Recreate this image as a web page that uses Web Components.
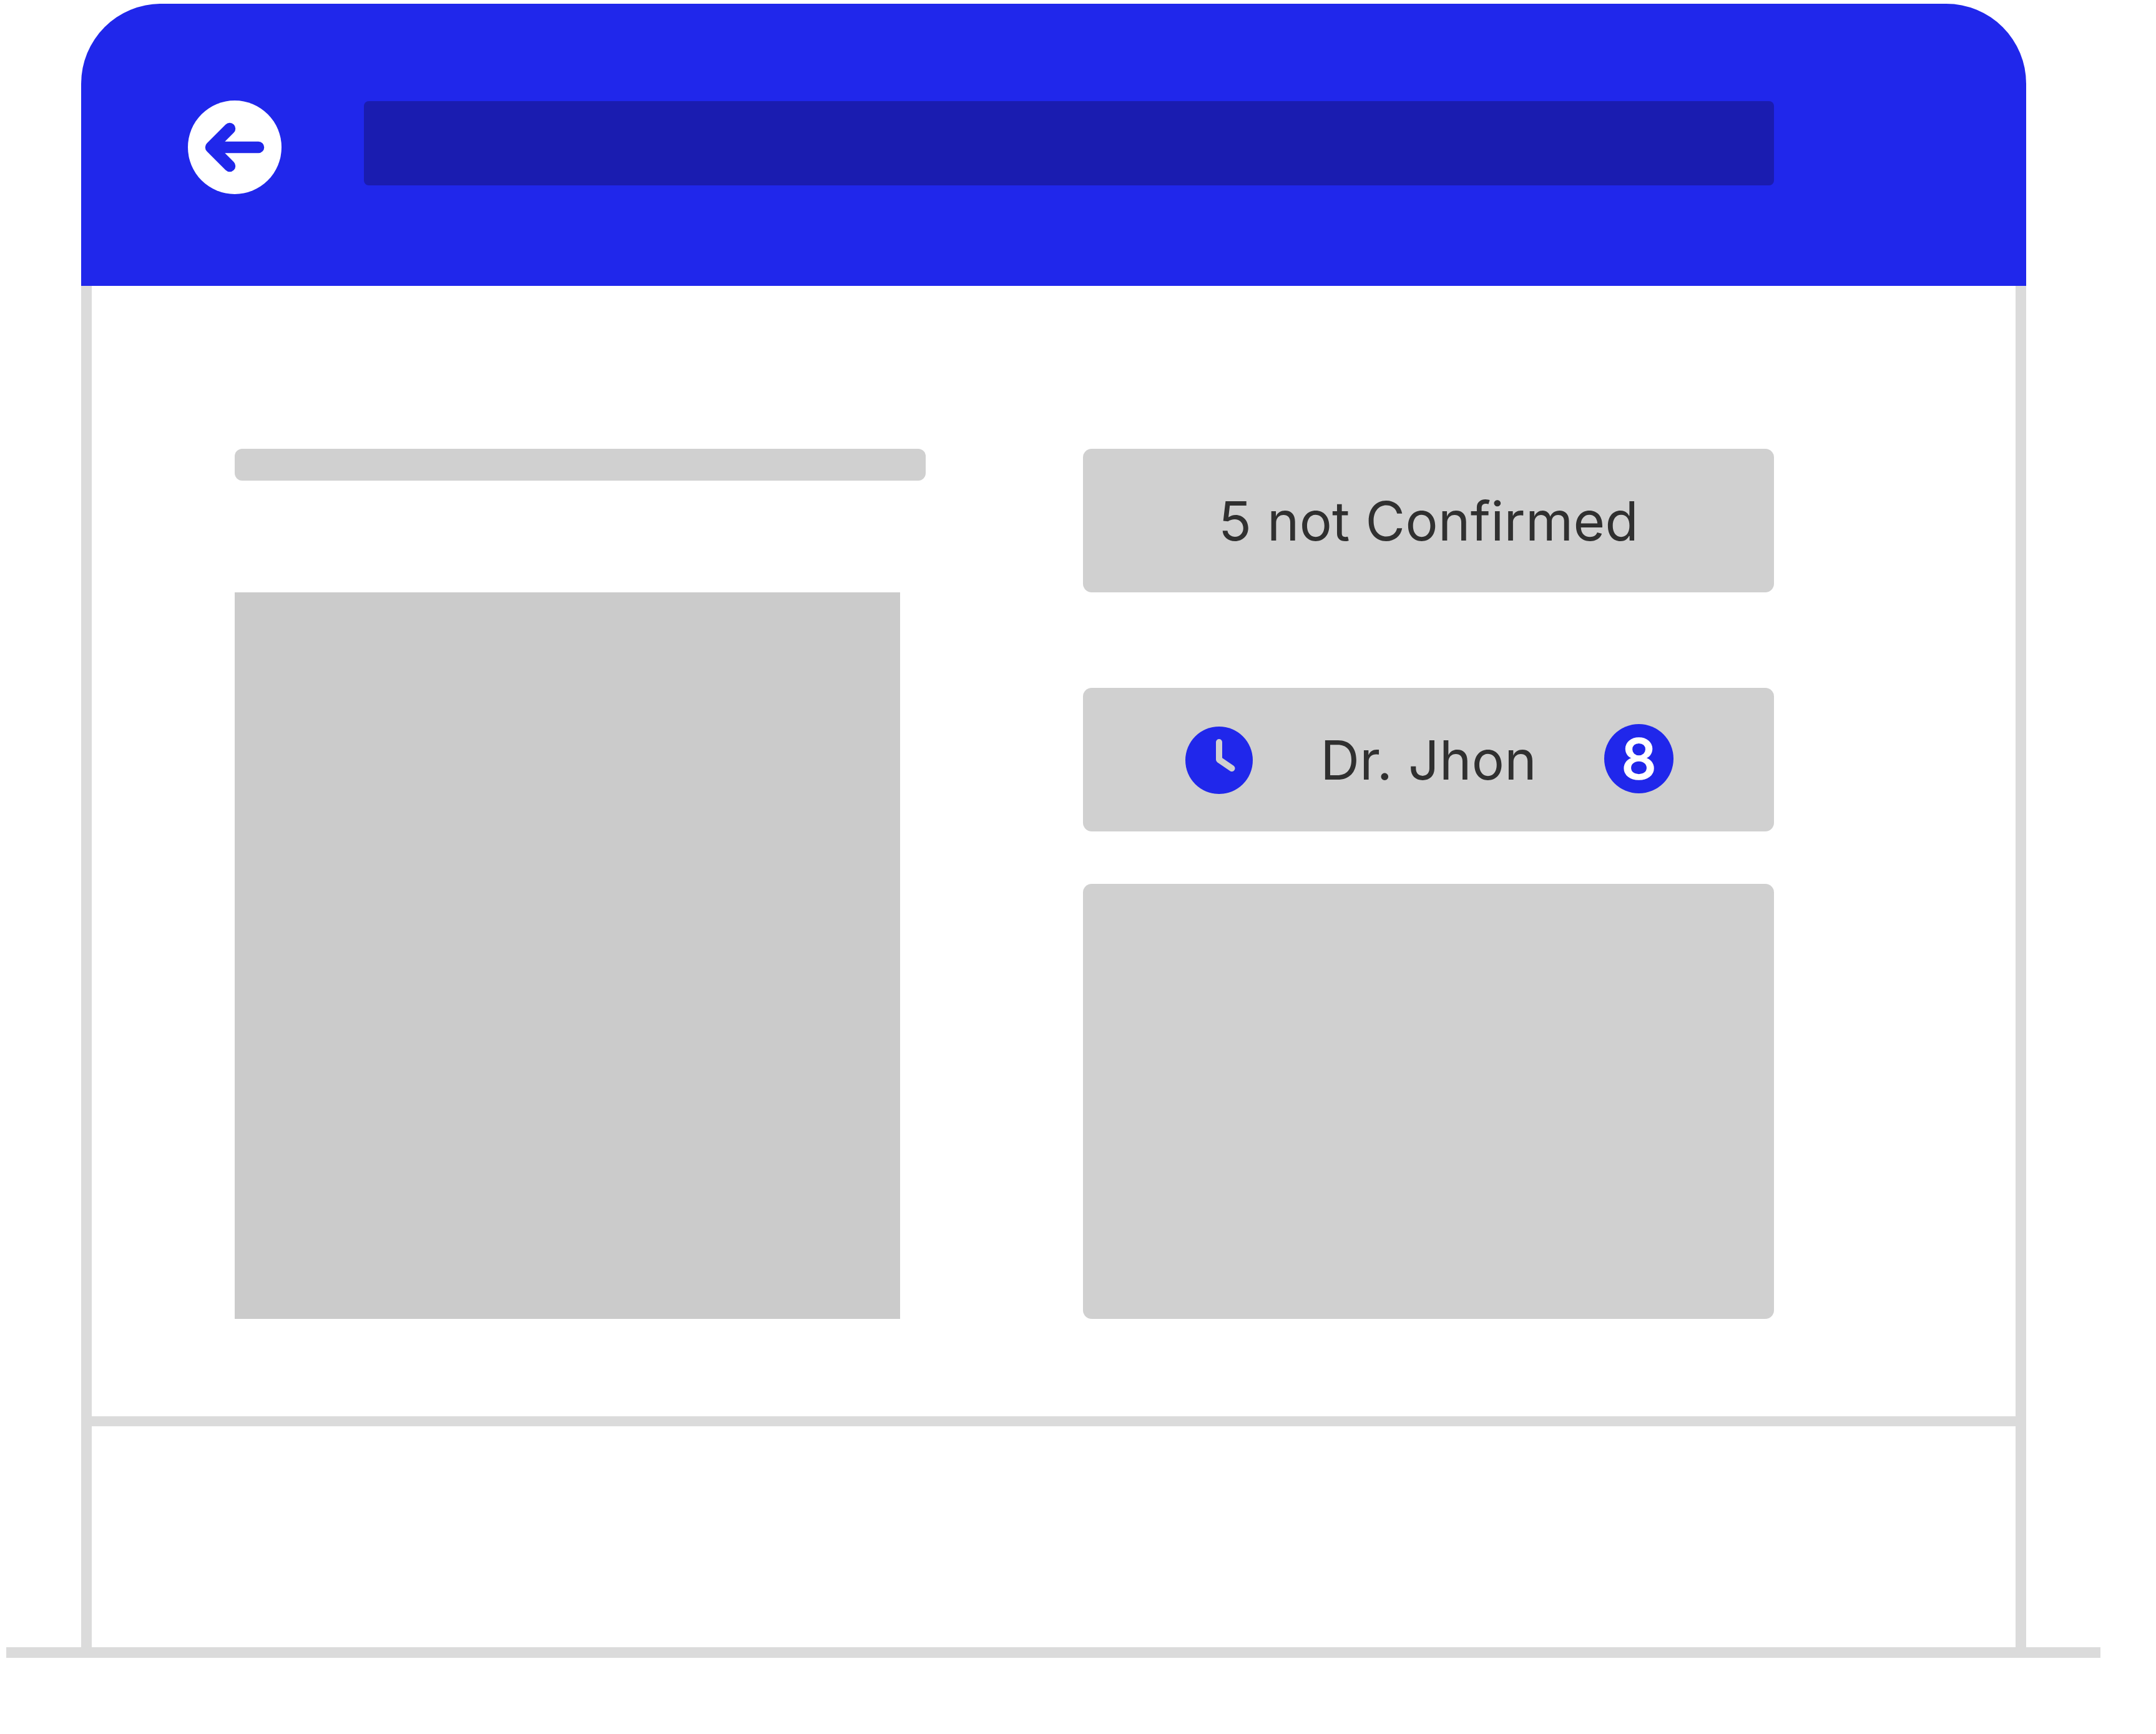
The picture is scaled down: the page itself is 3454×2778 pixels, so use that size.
<!DOCTYPE html>
<html lang="en">
<head>
<meta charset="utf-8">
<title>Appointment</title>
<style>
  html, body { margin: 0; background: #fff; }
  body { width: 3454px; height: 2778px; overflow: hidden; }
</style>
</head>
<body>
<app-window>
  <app-header slot="header">
    <back-button></back-button>
  </app-header>

  <div slot="left" class="left">
    <gray-panel height="51" radius="12"></gray-panel>
    <gray-panel height="1164" radius="0" tone="#cbcbcb" width="1066" gap="179"></gray-panel>
  </div>

  <gray-panel slot="right" height="230">5 not Confirmed</gray-panel>
  <doctor-row slot="right" name="Dr. Jhon" number="8" style="margin-top:153px"></doctor-row>
  <gray-panel slot="right" height="697" gap="84"></gray-panel>
</app-window>

<script>
// AppWindow: browser frame with header, two columns, footer and ground line
class AppWindow extends HTMLElement {
  constructor() {
    super();
    this.attachShadow({ mode: "open" });
    this.shadowRoot.innerHTML = `
      <style>
        :host {
          display: block;
          padding-top: 6px;
          font-family: Inter, "Liberation Sans", sans-serif;
        }
        .frame {
          margin-left: 130px;
          width: 3116px;
          box-sizing: border-box;
        }
        .body {
          height: 2181px;
          display: flex;
          flex-direction: column;
          box-sizing: border-box;
          border-left: 17px solid #dbdbdb;
          border-right: 17px solid #dbdbdb;
        }
        .main {
          height: 1827px;
          box-sizing: border-box;
          padding: 261px 0 0 229px;
          display: flex;
          gap: 252px;
          border-bottom: 16px solid #dbdbdb;
        }
        .col {
          width: 1107px;
          display: flex;
          flex-direction: column;
        }
        .ground {
          margin-left: 10px;
          width: 3355px;
          height: 17px;
          background: #dbdbdb;
        }
      </style>
      <div class="frame">
        <slot name="header"></slot>
        <div class="body">
          <div class="main">
            <div class="col"><slot name="left"></slot></div>
            <div class="col"><slot name="right"></slot></div>
          </div>
        </div>
      </div>
      <div class="ground"></div>
    `;
  }
}

class AppHeader extends HTMLElement {
  constructor() {
    super();
    this.attachShadow({ mode: "open" });
    this.shadowRoot.innerHTML = `
      <style>
        :host {
          display: flex;
          align-items: flex-start;
          height: 452px;
          box-sizing: border-box;
          padding: 155px 0 0 171px;
          background: #2027eb;
          border-radius: 128px 128px 0 0;
        }
        .search {
          width: 2259px;
          height: 135px;
          margin: 1px 0 0 132px;
          background: #1a1cb0;
          border-radius: 8px;
        }
      </style>
      <slot></slot>
      <div class="search"></div>
    `;
  }
}

class BackButton extends HTMLElement {
  constructor() {
    super();
    this.attachShadow({ mode: "open" });
    this.shadowRoot.innerHTML = `
      <style>
        :host { display: block; width: 150px; height: 150px; }
        svg { display: block; }
      </style>
      <svg width="150" height="150" viewBox="0 0 150 150">
        <circle cx="75" cy="75" r="75" fill="#fff"/>
        <path d="M113 75H37M67 45L37 75L67 105" fill="none" stroke="#2027eb"
          stroke-width="18.5" stroke-linecap="round" stroke-linejoin="round"/>
      </svg>
    `;
  }
}

class GrayPanel extends HTMLElement {
  constructor() {
    super();
    this.attachShadow({ mode: "open" });
    const height = this.getAttribute("height") || 230;
    const width = this.getAttribute("width");
    const radius = this.getAttribute("radius") || 14;
    const tone = this.getAttribute("tone") || "#d0d0d0";
    const gap = this.getAttribute("gap") || 0;

    this.shadowRoot.innerHTML = `
      <style>
        :host {
          display: flex;
          align-items: center;
          justify-content: center;
          flex: none;
          box-sizing: border-box;
          width: ${width ? width + "px" : "100%"};
          height: ${height}px;
          margin-top: ${gap}px;
          background: ${tone};
          border-radius: ${radius}px;
          color: #303030;
          font-size: 87px;
          font-weight: 400;
          letter-spacing: 0.3px;
          line-height: 1;
        }
      </style>
      <slot></slot>
    `;
  }
}

class DoctorRow extends HTMLElement {
  constructor() {
    super();
    this.attachShadow({ mode: "open" });
    this.shadowRoot.innerHTML = `
      <style>
        :host {
          display: flex;
          align-items: center;
          justify-content: space-between;
          flex: none;
          box-sizing: border-box;
          height: 230px;
          padding: 0 161px 0 164px;
          background: #d0d0d0;
          border-radius: 14px;
          color: #303030;
          font-size: 87px;
          font-weight: 400;
          letter-spacing: 0.3px;
          line-height: 1;
        }
        svg { display: block; margin-top: 2px; }
        .number {
          width: 111px;
          height: 111px;
          margin-top: -3px;
          border-radius: 50%;
          background: #2027eb;
          color: #fff;
          display: flex;
          align-items: center;
          justify-content: center;
          font-size: 90px;
          font-weight: 500;
          -webkit-text-stroke: 1.5px #fff;
          letter-spacing: 0;
        }
      </style>
      <svg width="108" height="108" viewBox="0 0 108 108">
        <circle cx="54" cy="54" r="54" fill="#2027eb"/>
        <path d="M54 25V53L74.5 67" fill="none" stroke="#d0d0d0" stroke-width="10"
          stroke-linecap="round" stroke-linejoin="round"/>
      </svg>
      <span class="name"></span>
      <span class="number"></span>
    `;
  }

  connectedCallback() {
    this.shadowRoot.querySelector(".name").textContent = this.getAttribute("name");
    this.shadowRoot.querySelector(".number").textContent = this.getAttribute("number");
  }
}

customElements.define("app-window", AppWindow);
customElements.define("app-header", AppHeader);
customElements.define("back-button", BackButton);
customElements.define("gray-panel", GrayPanel);
customElements.define("doctor-row", DoctorRow);
</script>
</body>
</html>
